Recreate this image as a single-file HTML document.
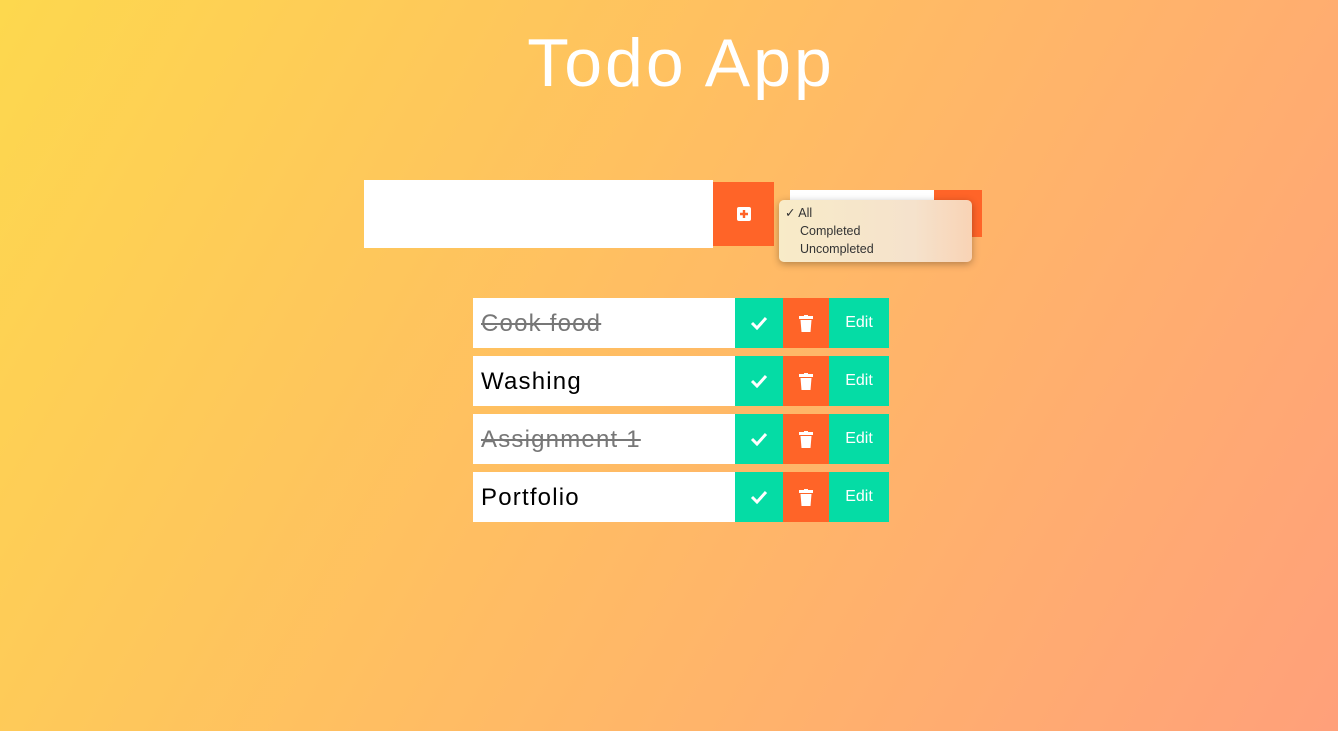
<!DOCTYPE html>
<html><head><style>
*{margin:0;padding:0;box-sizing:border-box}
body{width:1338px;height:731px;overflow:hidden;background:linear-gradient(120deg,#fdd84e 0%,#ffbe62 45%,#ffa07a 100%);font-family:"Liberation Sans",sans-serif;position:relative}
h1{position:absolute;left:12px;width:1338px;top:24px;text-align:center;color:#fff;font-size:68px;font-weight:normal;letter-spacing:3px}
.abs{position:absolute}
.row{position:absolute;left:473px;width:416px;height:50px;display:flex}
.t{width:262px;background:#fff;font-size:24px;line-height:52px;padding-left:8px;color:#000;letter-spacing:1.2px}
.t.d{text-decoration:line-through;color:#777}
.c{width:48px;background:#05dca5;display:flex;align-items:center;justify-content:center}
.x{width:46px;background:#ff6428;display:flex;align-items:center;justify-content:center}
.e{width:60px;background:#05dca5;color:#fff;font-size:16px;display:flex;align-items:center;justify-content:center}
</style></head><body>
<h1>Todo App</h1>
<div class="abs" style="left:364px;top:180px;width:349px;height:68px;background:#fff"></div>
<div class="abs" style="left:713px;top:182px;width:61px;height:64px;background:#ff6428;display:flex;align-items:center;justify-content:center">
<svg width="14" height="14" viewBox="0 0 14 14"><rect width="14" height="14" rx="2" fill="#fff"/><path d="M7 3v8M3 7h8" stroke="#ff6428" stroke-width="2.4"/></svg></div>
<div class="abs" style="left:790px;top:190px;width:144px;height:47px;background:#fff"></div>
<div class="abs" style="left:934px;top:190px;width:48px;height:47px;background:#ff6428"></div>
<div class="abs" style="left:779px;top:200px;width:193px;height:62px;background:linear-gradient(90deg,#f8ebc8,#f5e2cc 70%,#f9d3b5);border-radius:5px;box-shadow:0 2px 8px rgba(0,0,0,.3);font-size:12.5px;color:#333;padding-top:4px;line-height:18px">
<div style="padding-left:6px">✓ All</div><div style="padding-left:21px">Completed</div><div style="padding-left:21px">Uncompleted</div></div>
<div class="row" style="top:298px"><div class="t d">Cook food</div><div class="c"><svg width="18" height="14" viewBox="0 0 18 14"><path d="M2 7l5 5 9-10" stroke="#fff" stroke-width="3" fill="none"/></svg></div><div class="x"><svg width="14" height="17" viewBox="0 0 14 17"><rect x="0" y="1" width="14" height="3" fill="#fff"/><rect x="5" y="0" width="4" height="2" fill="#fff"/><path d="M1.5 5h11l-1 12h-9z" fill="#fff"/></svg></div><div class="e">Edit</div></div>
<div class="row" style="top:356px"><div class="t">Washing</div><div class="c"><svg width="18" height="14" viewBox="0 0 18 14"><path d="M2 7l5 5 9-10" stroke="#fff" stroke-width="3" fill="none"/></svg></div><div class="x"><svg width="14" height="17" viewBox="0 0 14 17"><rect x="0" y="1" width="14" height="3" fill="#fff"/><rect x="5" y="0" width="4" height="2" fill="#fff"/><path d="M1.5 5h11l-1 12h-9z" fill="#fff"/></svg></div><div class="e">Edit</div></div>
<div class="row" style="top:414px"><div class="t d">Assignment  1</div><div class="c"><svg width="18" height="14" viewBox="0 0 18 14"><path d="M2 7l5 5 9-10" stroke="#fff" stroke-width="3" fill="none"/></svg></div><div class="x"><svg width="14" height="17" viewBox="0 0 14 17"><rect x="0" y="1" width="14" height="3" fill="#fff"/><rect x="5" y="0" width="4" height="2" fill="#fff"/><path d="M1.5 5h11l-1 12h-9z" fill="#fff"/></svg></div><div class="e">Edit</div></div>
<div class="row" style="top:472px"><div class="t">Portfolio</div><div class="c"><svg width="18" height="14" viewBox="0 0 18 14"><path d="M2 7l5 5 9-10" stroke="#fff" stroke-width="3" fill="none"/></svg></div><div class="x"><svg width="14" height="17" viewBox="0 0 14 17"><rect x="0" y="1" width="14" height="3" fill="#fff"/><rect x="5" y="0" width="4" height="2" fill="#fff"/><path d="M1.5 5h11l-1 12h-9z" fill="#fff"/></svg></div><div class="e">Edit</div></div>
</body></html>
